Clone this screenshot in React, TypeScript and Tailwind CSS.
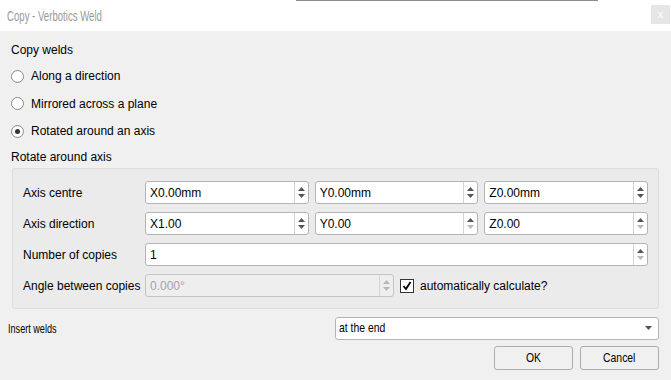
import React from "react";

const font = { fontFamily: '"Liberation Sans", Arial, sans-serif' };

function Arrows({ upOn = true, downOn = true }: { upOn?: boolean; downOn?: boolean }) {
  const on = "#555";
  const off = "#b8b8b8";
  return (
    <div className="flex h-full w-[14px] flex-col items-center justify-center gap-[3px] border-l border-[#d4d4d4]">
      <svg width="7" height="4" viewBox="0 0 7 4">
        <polygon points="0,4 3.5,0 7,4" fill={upOn ? on : off} />
      </svg>
      <svg width="7" height="4" viewBox="0 0 7 4">
        <polygon points="0,0 7,0 3.5,4" fill={downOn ? on : off} />
      </svg>
    </div>
  );
}

function Spin({
  value,
  upOn = true,
  downOn = true,
  disabled = false,
  className = "flex-1",
}: {
  value: string;
  upOn?: boolean;
  downOn?: boolean;
  disabled?: boolean;
  className?: string;
}) {
  return (
    <div
      className={`${className} flex h-[23px] items-center rounded-[3px] border ${
        disabled ? "border-[#c4c4c4] bg-[#eeeeee]" : "border-[#b4b4b4] bg-white"
      }`}
    >
      <div className={`flex-1 pl-[4px] text-[12px] ${disabled ? "text-[#a4a4a4]" : "text-black"}`}>{value}</div>
      <Arrows upOn={upOn} downOn={downOn} />
    </div>
  );
}

function Radio({ label, checked = false }: { label: string; checked?: boolean }) {
  return (
    <div className="flex h-[20px] items-center gap-[7px]">
      <div className="flex h-[13px] w-[13px] items-center justify-center rounded-full border border-[#8a8a8a] bg-white">
        {checked && <div className="h-[5px] w-[5px] rounded-full bg-[#333]" />}
      </div>
      <span className="text-[12px] text-black">{label}</span>
    </div>
  );
}

export default function App() {
  return (
    <div className="flex h-[380px] w-[671px] flex-col overflow-hidden bg-[#f0f0f0]" style={font}>
      {/* title bar */}
      <div className="flex h-[31px] flex-col bg-white">
        <div className="flex h-[1px]">
          <div className="w-[296px]" />
          <div className="w-[302px] bg-[#8c8c8c]" />
        </div>
        <div className="flex flex-1 items-center justify-between pl-[7px] pr-[1px]">
          <span className="origin-left scale-x-[0.62] whitespace-nowrap text-[15.5px] text-[#9a9a9a]">
            Copy - Verbotics Weld
          </span>
          <div className="mb-[3px] flex h-[19px] w-[19px] items-center justify-center bg-[#e6e6e6] text-[11px] text-white">
            x
          </div>
        </div>
      </div>

      <div className="flex flex-col px-[11px] pt-[11px]">
        <div className="h-[16px] text-[12px] leading-[16px] text-black">Copy welds</div>
        <div className="mt-[8px] flex flex-col gap-[7.5px]">
          <Radio label="Along a direction" />
          <Radio label="Mirrored across a plane" />
          <Radio label="Rotated around an axis" checked />
        </div>
        <div className="mt-[8px] h-[16px] text-[12px] leading-[16px] text-black">Rotate around axis</div>
      </div>

      <div className="ml-[12px] mr-[12px] mt-[3px] flex h-[141px] flex-col gap-[8px] rounded-[3px] border border-[#dcdcdc] bg-[#ebebeb] pl-[10px] pr-[10px] pt-[12px]">
        <div className="flex items-center">
          <div className="w-[122px] text-[12px] text-black">Axis centre</div>
          <div className="flex flex-1 gap-[6px]">
            <Spin value="X0.00mm" />
            <Spin value="Y0.00mm" />
            <Spin value="Z0.00mm" />
          </div>
        </div>
        <div className="flex items-center">
          <div className="w-[122px] text-[12px] text-black">Axis direction</div>
          <div className="flex flex-1 gap-[6px]">
            <Spin value="X1.00" />
            <Spin value="Y0.00" downOn={false} />
            <Spin value="Z0.00" downOn={false} />
          </div>
        </div>
        <div className="flex items-center">
          <div className="w-[122px] text-[12px] text-black">Number of copies</div>
          <Spin value="1" downOn={false} />
        </div>
        <div className="flex items-center">
          <div className="w-[122px] whitespace-nowrap text-[12px] text-black">Angle between copies</div>
          <Spin value="0.000°" disabled upOn={false} downOn={false} className="w-[249px]" />
          <div className="ml-[6px] flex h-[14px] w-[14px] items-center justify-center border border-[#333] bg-white">
            <svg width="10" height="10" viewBox="0 0 10 10">
              <path d="M1.5 5 L4 8 L8.5 1" stroke="#000" strokeWidth="1.8" fill="none" />
            </svg>
          </div>
          <span className="ml-[6px] text-[12px] text-black">automatically calculate?</span>
        </div>
      </div>

      <div className="mt-[7px] flex items-center pl-[8px] pr-[12px]">
        <div className="flex-1">
          <span className="inline-block origin-left scale-x-[0.7] whitespace-nowrap text-[13px] text-black">
            Insert welds
          </span>
        </div>
        <div className="flex h-[23px] w-[324px] items-center justify-between rounded-[3px] border border-[#b4b4b4] bg-white pl-[3px] pr-[6px]">
          <span className="inline-block origin-left scale-x-[0.8] whitespace-nowrap text-[13px] text-black">at the end</span>
          <svg width="7" height="4" viewBox="0 0 7 4">
            <polygon points="0,0 7,0 3.5,4" fill="#555" />
          </svg>
        </div>
      </div>

      <div className="mt-[6px] flex justify-end gap-[7px] pr-[12px]">
        <div className="flex h-[24px] w-[79px] items-center justify-center rounded-[3px] border border-[#adadad] bg-[#f0f0f0]">
          <span className="inline-block scale-x-[0.8] text-[13px] text-black">OK</span>
        </div>
        <div className="flex h-[24px] w-[79px] items-center justify-center rounded-[3px] border border-[#adadad] bg-[#f0f0f0]">
          <span className="inline-block scale-x-[0.8] text-[13px] text-black">Cancel</span>
        </div>
      </div>
    </div>
  );
}
